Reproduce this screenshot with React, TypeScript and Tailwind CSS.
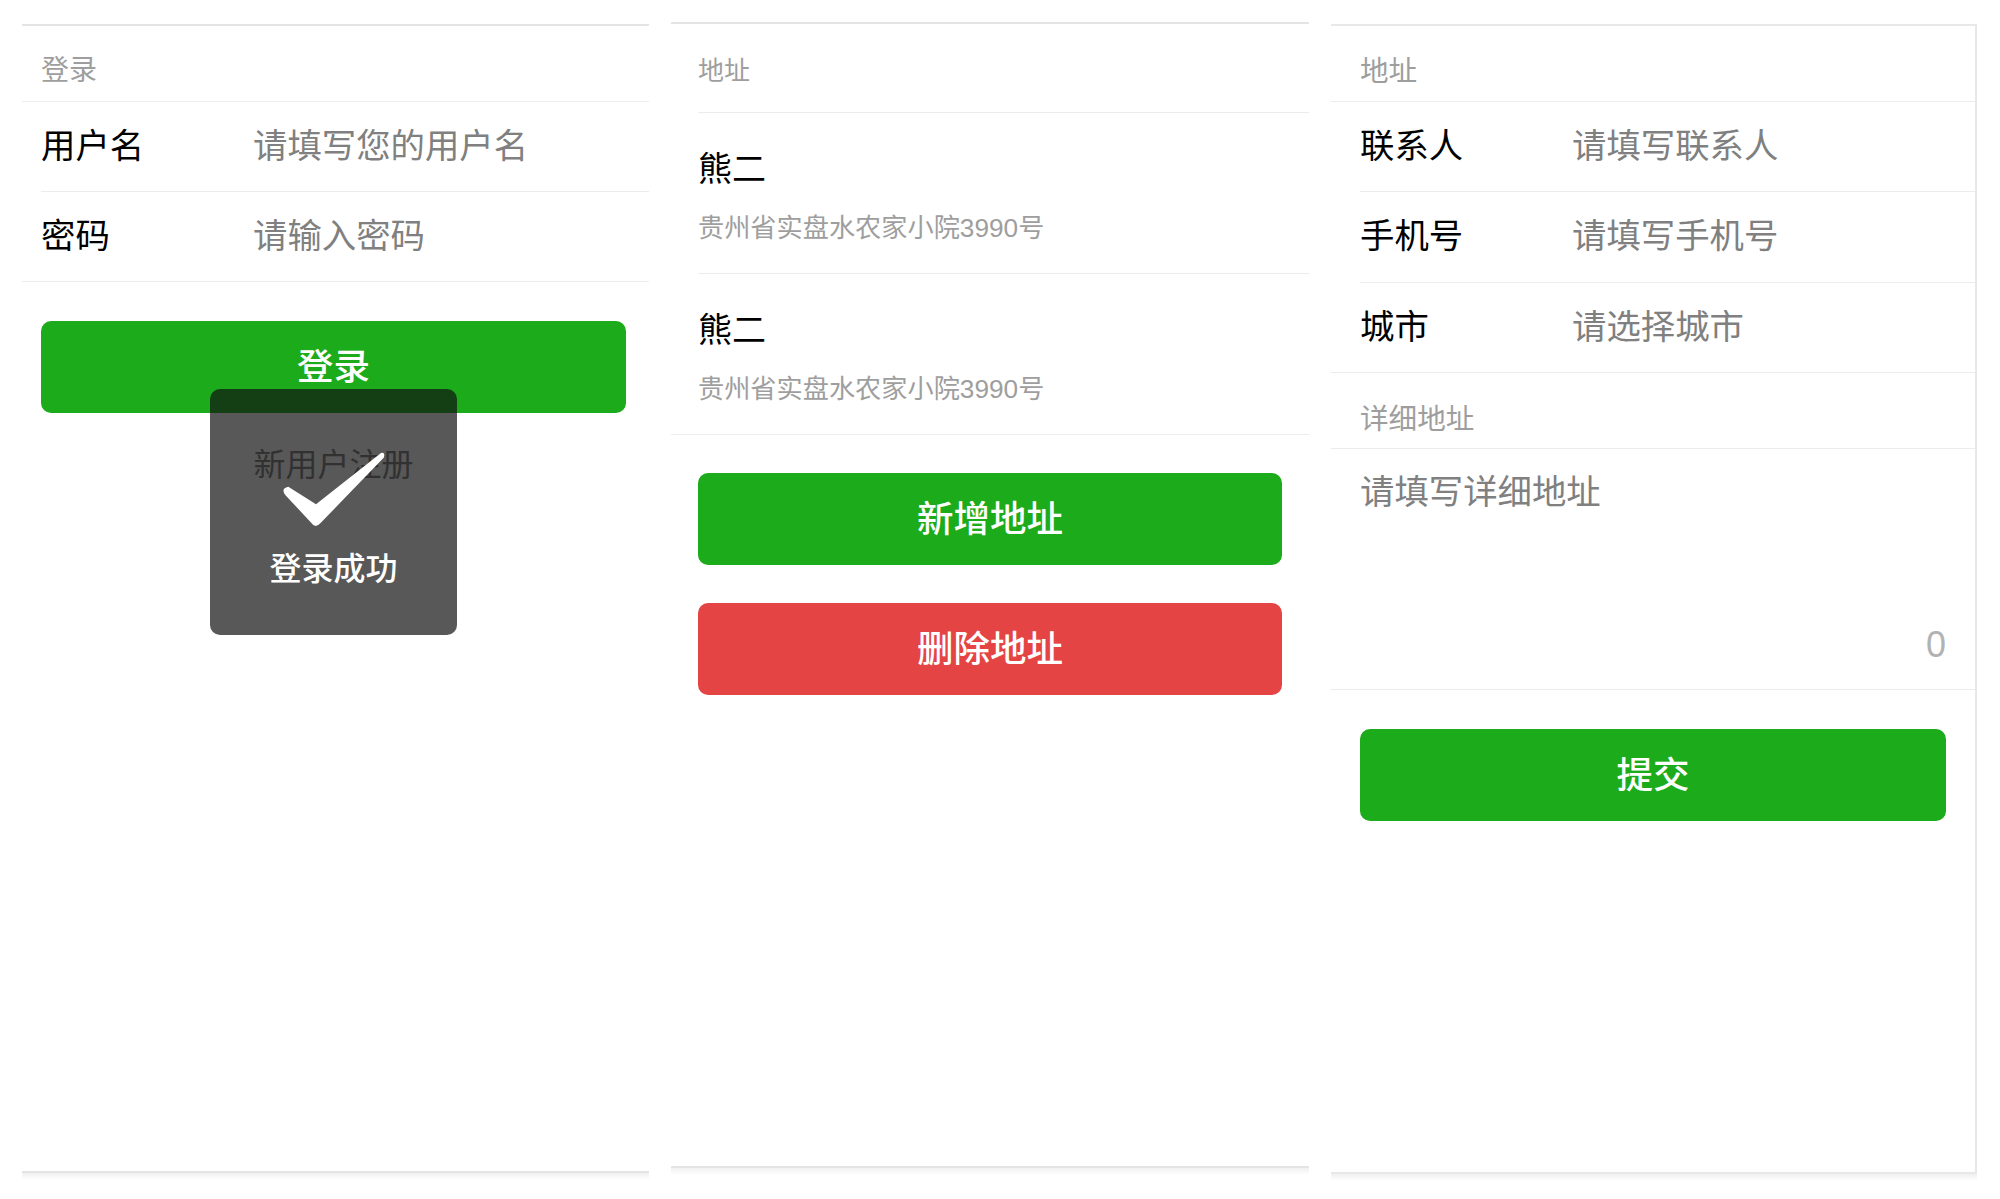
import React from "react";

const font = "font-['Liberation_Sans','Noto_Sans_CJK_SC',sans-serif]";

function Header({ title, className = "" }: { title: string; className?: string }) {
  return <div className={`leading-[36px] text-[#9e9e9e] ${className}`}>{title}</div>;
}

function FormRow({ label, hint, className = "" }: { label: string; hint: string; className?: string }) {
  return (
    <div className={`flex items-center border-b border-[#ececec] ${className}`}>
      <div className="w-[212px] text-[34.4px] text-black">{label}</div>
      <div className="text-[34.4px] text-[#808080]">{hint}</div>
    </div>
  );
}

function Btn({ text, red }: { text: string; red?: boolean }) {
  return (
    <div className={`h-[92px] pt-[2px] rounded-[10px] flex items-center justify-center text-[36.5px] font-medium text-white ${red ? "bg-[#e54444]" : "bg-[#1cab1b]"}`}>
      {text}
    </div>
  );
}

function Bottom() {
  return <div className="h-[7px] bg-gradient-to-b from-[#f0f0f0] to-white" />;
}

function AddressItem({ className = "" }: { className?: string }) {
  return (
    <div className={`h-[161px] pt-[34px] border-b border-[#ececec] ${className}`}>
      <div className="text-[34px] leading-[44px] text-black">熊二</div>
      <div className="mt-[19px] text-[26.2px] leading-[36px] text-[#9e9e9e]">贵州省实盘水农家小院3990号</div>
    </div>
  );
}

function LoginPanel() {
  return (
    <div className="w-[627px] mt-[24px] shrink-0 relative">
      <div className="h-[1149px] border-y-2 border-[#e4e4e4] flex flex-col">
        <Header title="登录" className="text-[28px] pl-[19px] pt-[27px] pb-[12px] border-b border-[#ececec]" />
        <FormRow label="用户名" hint="请填写您的用户名" className="ml-[19px] h-[90px]" />
        <FormRow label="密码" hint="请输入密码" className="pl-[19px] h-[90px]" />
        <div className="mt-[39px] ml-[19px] w-[585px]">
          <Btn text="登录" />
        </div>
        <div className="mt-[31px] ml-[19px] w-[585px] text-center text-[32px] leading-[42px] text-[#7d7d7d]">新用户注册</div>
      </div>
      <Bottom />
      {/* toast sits over the button and link */}
      <div className="absolute left-[188px] top-[365px] w-[247px] h-[246px] rounded-[10px] bg-[#111111]/70 flex flex-col items-center text-white">
        <svg width="110" height="80" viewBox="278 450 110 80" className="mt-[61px]">
          <path
            d="M287.3 486.7 L315 504.2 L380 453 Q384.5 452 382.9 457.5 L319.6 523 Q314.3 528.8 310.4 523 L284.5 495.2 Q279.2 488.5 287.3 486.7 Z"
            fill="white"
          />
        </svg>
        <div className="mt-[18px] text-[32px] leading-[42px] font-medium">登录成功</div>
      </div>
    </div>
  );
}

function AddressPanel() {
  return (
    <div className="w-[638px] ml-[22px] mt-[22px] shrink-0">
      <div className="h-[1146px] border-y-2 border-[#e4e4e4] flex flex-col">
        <Header title="地址" className="text-[26px] ml-[27px] pt-[29px] pb-[23px] border-b border-[#ececec]" />
        <AddressItem className="ml-[27px]" />
        <AddressItem className="pl-[27px]" />
        <div className="mt-[38px] ml-[27px] w-[584px] flex flex-col gap-[38px]">
          <Btn text="新增地址" />
          <Btn text="删除地址" red />
        </div>
      </div>
      <Bottom />
    </div>
  );
}

function ContactPanel() {
  return (
    <div className="w-[646px] ml-[22px] mt-[24px] shrink-0">
      <div className="h-[1150px] border-y-2 border-r-2 border-[#e8e8e8] flex flex-col">
        <Header title="地址" className="text-[28.6px] pl-[29px] pt-[27px] pb-[12px] border-b border-[#ececec]" />
        <FormRow label="联系人" hint="请填写联系人" className="ml-[29px] h-[90px]" />
        <FormRow label="手机号" hint="请填写手机号" className="ml-[29px] h-[91px]" />
        <FormRow label="城市" hint="请选择城市" className="pl-[29px] h-[90px]" />
        <Header title="详细地址" className="text-[28.6px] pl-[29px] pt-[28px] pb-[11px] border-b border-[#ececec]" />
        <div className="h-[241px] px-[29px] pt-[20px] border-b border-[#ececec] flex flex-col">
          <div className="text-[34.4px] leading-[46px] text-[#808080]">请填写详细地址</div>
          <div className="mt-[107px] text-right text-[36px] leading-[46px] font-medium text-[#b2b2b2]">0</div>
        </div>
        <div className="mt-[39px] mx-[29px]">
          <Btn text="提交" />
        </div>
      </div>
      <Bottom />
    </div>
  );
}

export default function App() {
  return (
    <div className={`w-[2000px] h-[1199px] overflow-hidden bg-white flex items-start pl-[22px] ${font}`}>
      <LoginPanel />
      <AddressPanel />
      <ContactPanel />
    </div>
  );
}
